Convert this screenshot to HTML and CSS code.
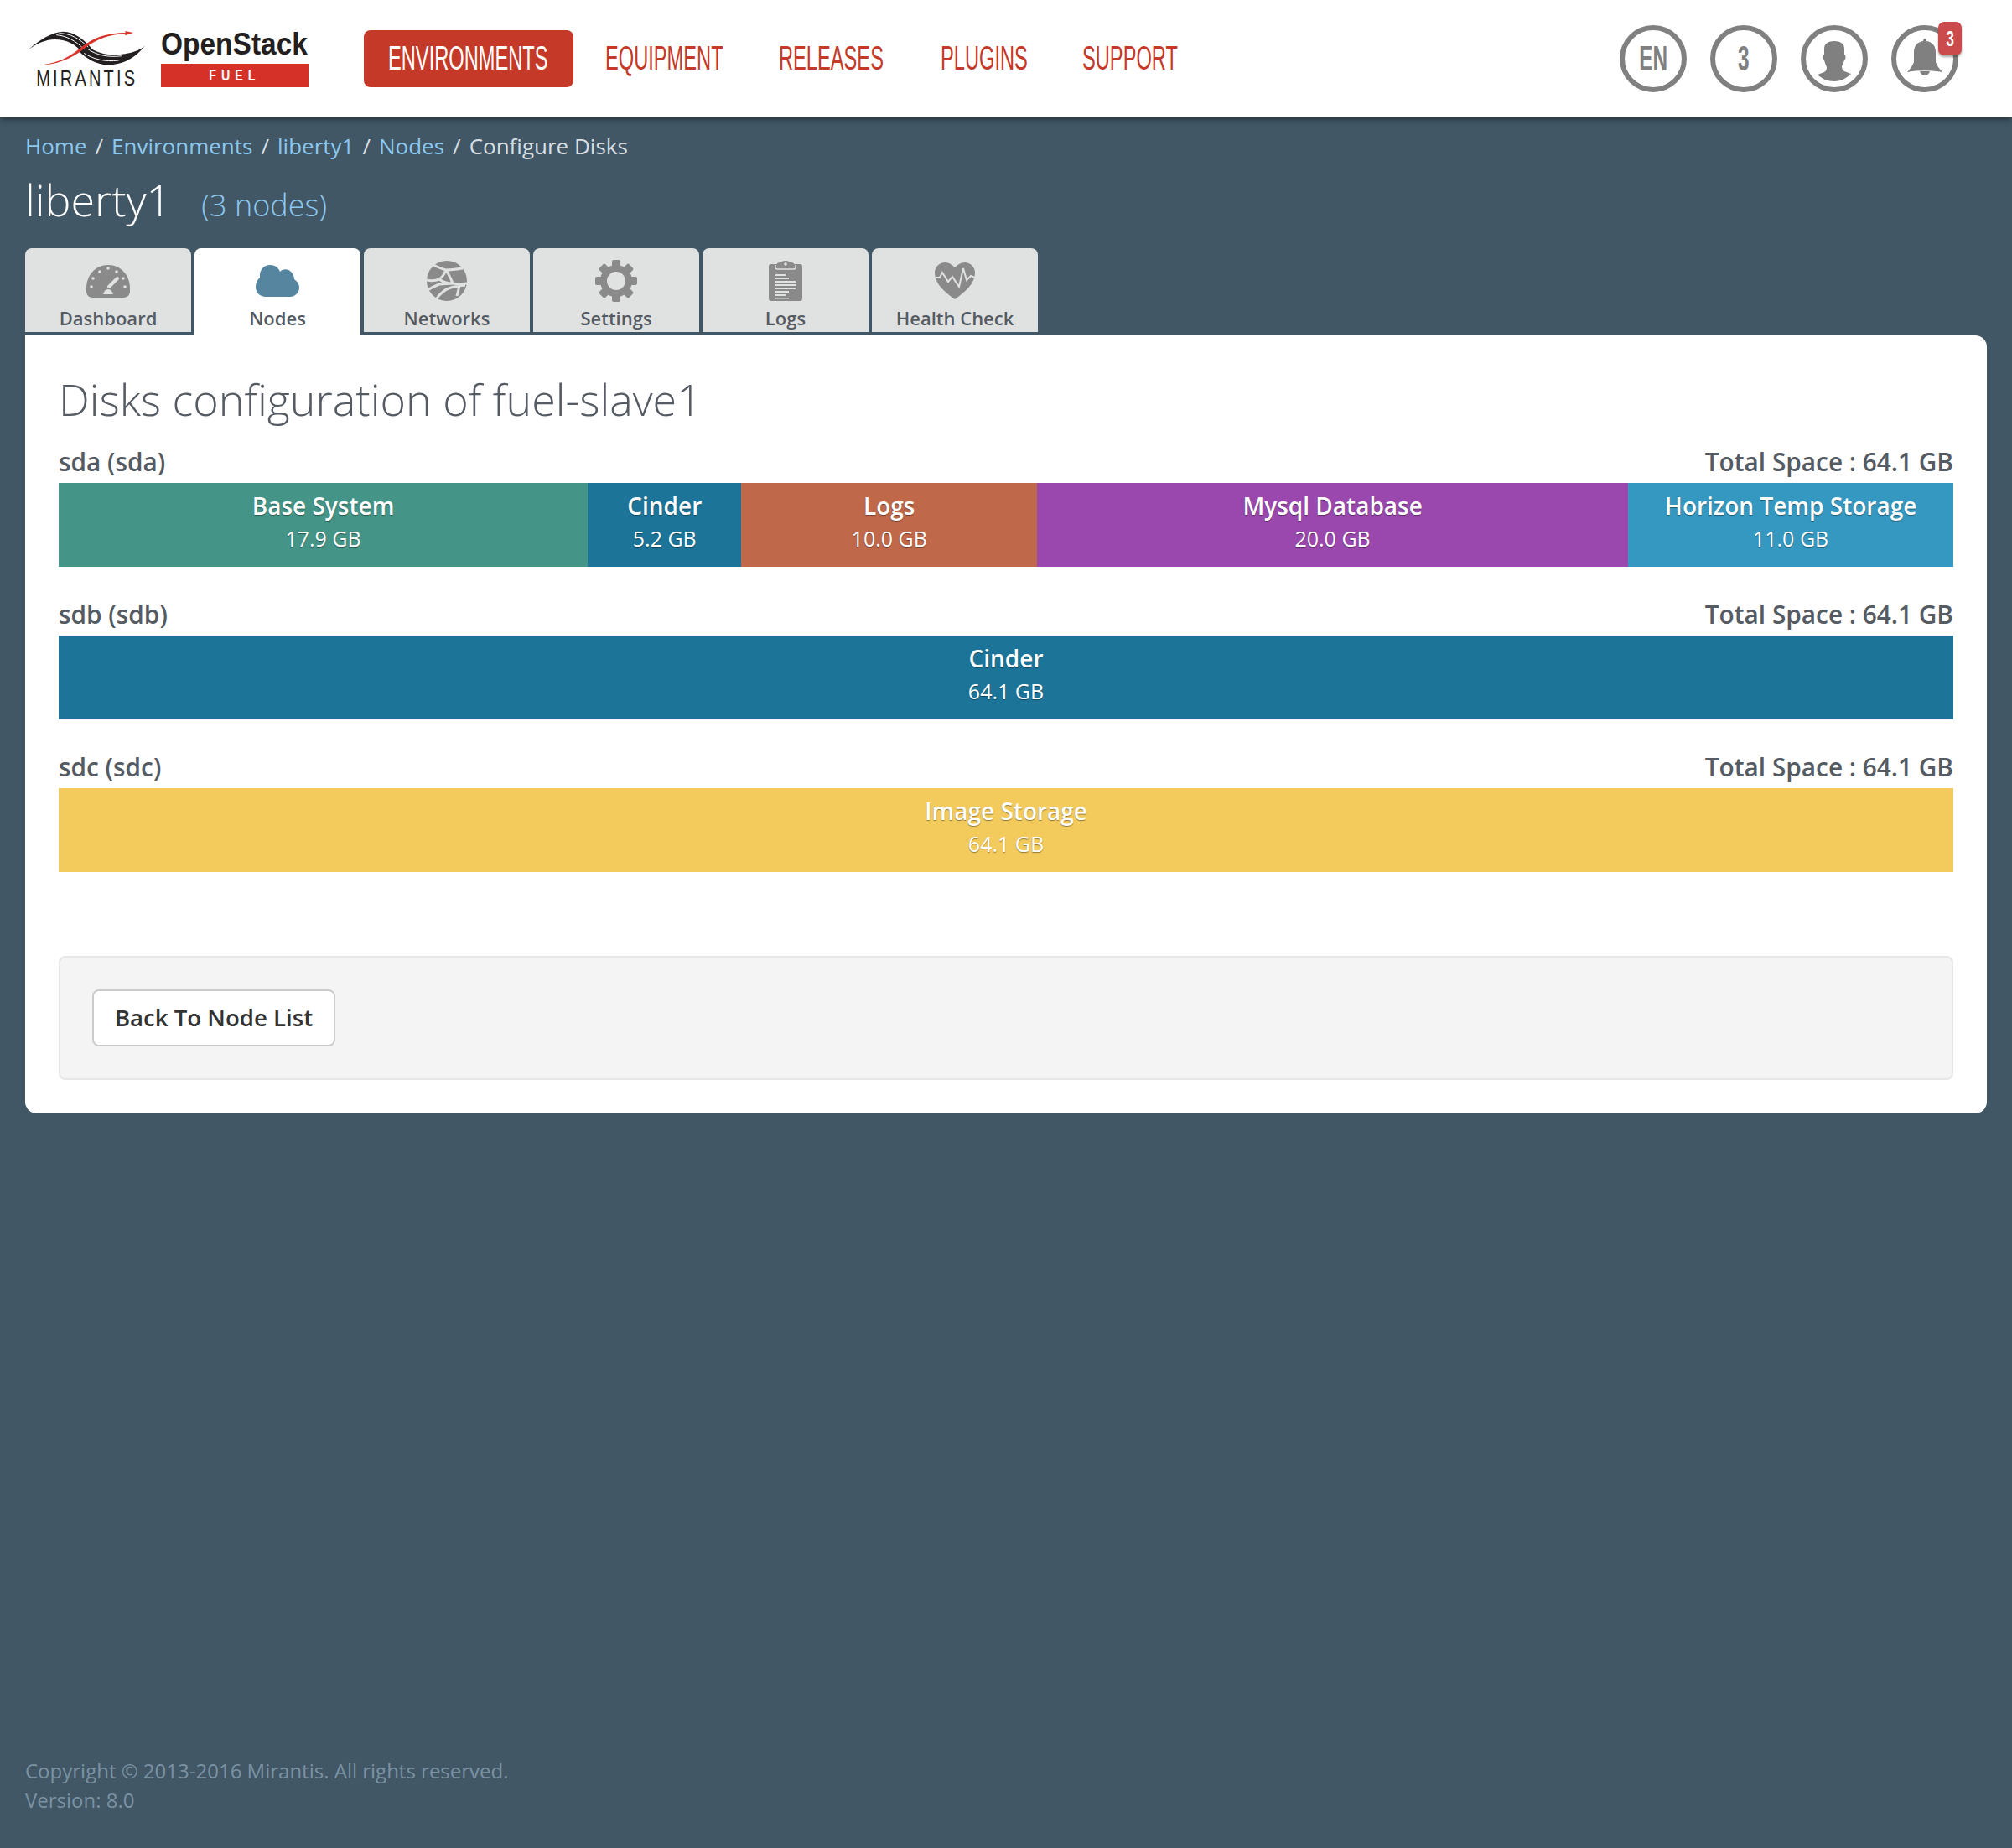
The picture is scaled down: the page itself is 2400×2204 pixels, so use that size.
FILE: index.html
```html
<!DOCTYPE html>
<html lang="en">
<head>
    <meta charset="UTF-8">
    <title>Configure Disks</title>
    <link rel="stylesheet" href="styles.css">
</head>
<body>
    <header class="navbar">
        <div class="logo">
            <div class="logo-mirantis">
                <svg class="logo-mark" viewBox="38 32 424 124" width="141" height="41">
                    <path fill="#231f20" d="M38 100C80 65 120 36 165 34c38 0 74 26 107 66l-30 20c-30-43-68-58-108-58-30 0-64 14-96 38z"/>
                    <path fill="#231f20" d="M460 85c-40 52-90 70-135 69-42-2-78-24-103-49l26-22c40 33 88 39 128 33 30-4 64-11 84-31z"/>
                    <path fill="none" stroke="#fff" stroke-width="3" d="M140 46c35 3 70 20 100 52M150 40c40 0 75 20 105 50M255 98c30 20 70 30 120 24M240 112c35 22 75 32 125 26"/>
                    <path fill="#d9342b" d="M80 155c55-4 100-24 145-60 50-42 100-56 165-57l-2-6 30 6-30 10 1-6c-60 3-105 19-150 55-50 38-100 56-159 58z"/>
                </svg>
                <span class="logo-name">MIRANTIS</span>
            </div>
            <div class="logo-product">
                <span class="logo-openstack">OpenStack</span>
                <span class="logo-fuel"><span>FUEL</span></span>
            </div>
        </div>
        <nav class="main-nav">
            <a class="nav-item nav-env active"><span>ENVIRONMENTS</span></a>
            <a class="nav-item nav-equip"><span>EQUIPMENT</span></a>
            <a class="nav-item nav-rel"><span>RELEASES</span></a>
            <a class="nav-item nav-plug"><span>PLUGINS</span></a>
            <a class="nav-item nav-sup"><span>SUPPORT</span></a>
        </nav>
        <div class="nav-icons">
            <div class="round-icon"><span class="round-text">EN</span></div>
            <div class="round-icon"><span class="round-text">3</span></div>
            <div class="round-icon">
                <svg class="icon-user" viewBox="0 0 40 48" width="40" height="48">
                    <path fill="#808080" d="M8 9c0-6 5-9 12-9s12 3 12 9v7c2 1 2 5 0 7-1 3-2 5-3 7 0 3 1 5 3 6 3 1 5 2 8 3-5 5-12 9-20 9S5 45 0 40c3-1 5-2 8-3 2-1 3-3 3-6-1-2-2-5-3-8-2-2-2-6 0-7V9z"/>
                </svg>
            </div>
            <div class="round-icon">
                <svg class="icon-bell" viewBox="0 0 42 44" width="42" height="44">
                    <path fill="#808080" d="M19 3c0-4 4-4 4 0 7 1 11 6 11 13v12c1 3 4 8 8 12-6-1-14-2-21-2S6 39 0 40c4-4 7-9 8-12V16C8 9 12 4 19 3z"/>
                    <path fill="#808080" d="M15 39c4-.5 8-.5 12 0-1 3-3 5-6 5s-5-2-6-5z"/>
                </svg>
                <span class="badge"><span>3</span></span>
            </div>
        </div>
    </header>

    <main class="content">
        <div class="breadcrumbs">
            <a>Home</a><i>/</i><a>Environments</a><i>/</i><a>liberty1</a><i>/</i><a>Nodes</a><i>/</i><span>Configure Disks</span>
        </div>
        <div class="cluster-title">
            <h1>liberty1</h1>
            <span class="node-count">(3 nodes)</span>
        </div>

        <div class="tabs">
            <div class="tab">
                <div class="tab-icon">
                    <svg viewBox="0 0 52 39" width="52" height="39">
                        <path fill="#8a8a8a" d="M26 0C10 0 0 13 0 28v3c0 5 3 8 8 8h36c5 0 8-3 8-8v-3C52 13 42 0 26 0z"/>
                        <g fill="#e0e2e2"><circle cx="26" cy="4" r="1.8"/><circle cx="16" cy="8" r="1.8"/><circle cx="36" cy="8" r="1.8"/><circle cx="8" cy="16" r="1.8"/><circle cx="44" cy="16" r="1.8"/><circle cx="6" cy="26" r="1.8"/><circle cx="46" cy="26" r="1.8"/></g>
                        <path fill="none" stroke="#e0e2e2" stroke-width="4" stroke-linecap="round" d="M27 26l10-10"/>
                        <path fill="#e0e2e2" d="M20 35c1-4 3-6 6-6s5 2 6 6z"/>
                    </svg>
                </div>
                <span>Dashboard</span>
            </div>
            <div class="tab active">
                <div class="tab-icon">
                    <svg viewBox="0 0 52 38" width="52" height="38">
                        <path fill="#55859f" d="M12 38C5 38 0 33 0 26c0-5 2-8 5-11C4 6 10 0 17 0c6 0 10 3 12 8 3-3 9-4 13 0 3 3 4 6 4 9 4 3 6 6 6 10 0 6-5 11-11 11z"/>
                    </svg>
                </div>
                <span>Nodes</span>
            </div>
            <div class="tab">
                <div class="tab-icon">
                    <svg viewBox="0 0 48 48" width="48" height="48">
                        <circle cx="24" cy="24" r="24" fill="#8a8a8a"/>
                        <path fill="none" stroke="#e0e2e2" stroke-width="3" d="M6 4c6 3 12 6 17 7 6 0 13-1 20-2M23 11c-2 5-5 9-8 11-5 2-10 2-15 1M15 22c5 4 11 5 16 5M23 11c3 5 6 10 8 16M31 27c6 1 11 1 17 0M1 35c5-3 9-5 14-7l16-1M11 46c5-7 11-12 18-14 5-1 12-3 17-3M39 30l-3 12"/>
                    </svg>
                </div>
                <span>Networks</span>
            </div>
            <div class="tab">
                <div class="tab-icon">
                    <svg viewBox="0 0 50 50" width="50" height="50">
                        <circle cx="25" cy="25" r="15" fill="none" stroke="#8a8a8a" stroke-width="8"/>
                        <g fill="#8a8a8a">
                            <rect x="20" y="0" width="10" height="10" rx="2"/>
                            <rect x="20" y="0" width="10" height="10" rx="2" transform="rotate(45 25 25)"/>
                            <rect x="20" y="0" width="10" height="10" rx="2" transform="rotate(90 25 25)"/>
                            <rect x="20" y="0" width="10" height="10" rx="2" transform="rotate(135 25 25)"/>
                            <rect x="20" y="0" width="10" height="10" rx="2" transform="rotate(180 25 25)"/>
                            <rect x="20" y="0" width="10" height="10" rx="2" transform="rotate(225 25 25)"/>
                            <rect x="20" y="0" width="10" height="10" rx="2" transform="rotate(270 25 25)"/>
                            <rect x="20" y="0" width="10" height="10" rx="2" transform="rotate(315 25 25)"/>
                        </g>
                    </svg>
                </div>
                <span>Settings</span>
            </div>
            <div class="tab">
                <div class="tab-icon">
                    <svg viewBox="0 0 40 48" width="40" height="48">
                        <path fill="#8a8a8a" d="M3 4h7V3c4-1 6-3 10-3s6 2 10 3v1h7c2 0 3 1 3 3v38c0 2-1 3-3 3H3c-2 0-3-1-3-3V7c0-2 1-3 3-3z"/>
                        <path fill="none" stroke="#e0e2e2" stroke-width="1.4" d="M8 5v3c0 1 1 2 2 2h20c1 0 2-1 2-2V5"/>
                        <circle cx="20" cy="4" r="1.8" fill="#e0e2e2"/>
                        <g fill="#e0e2e2"><rect x="8" y="16" width="12" height="2"/><rect x="8" y="20" width="16" height="2"/><rect x="8" y="24" width="24" height="2"/><rect x="8" y="28" width="24" height="2"/><rect x="8" y="32" width="24" height="2"/><rect x="8" y="36" width="16" height="2"/><rect x="8" y="40" width="12" height="2"/><rect x="8" y="44" width="16" height="1.5"/></g>
                    </svg>
                </div>
                <span>Logs</span>
            </div>
            <div class="tab">
                <div class="tab-icon">
                    <svg viewBox="0 0 48 44" width="48" height="44">
                        <path fill="#8a8a8a" d="M24 44C13 36 0 26 0 12 0 5 6 0 12 0c5 0 9 3 12 6 3-3 7-6 12-6 6 0 12 5 12 12 0 14-13 24-24 32z"/>
                        <path fill="none" stroke="#e0e2e2" stroke-width="2" d="M1 18h5l3-6 7 11 5-6 8 12 5-22 4 14 5-5 5 2"/>
                    </svg>
                </div>
                <span>Health Check</span>
            </div>
        </div>

        <section class="panel">
            <h2 class="panel-title">Disks configuration of fuel-slave1</h2>

            <div class="disk">
                <div class="disk-head"><span>sda (sda)</span><span>Total Space : 64.1 GB</span></div>
                <div class="disk-bar">
                    <div class="volume base" style="flex-grow: 17.9"><b>Base System</b><span>17.9 GB</span></div>
                    <div class="volume cinder" style="flex-grow: 5.2"><b>Cinder</b><span>5.2 GB</span></div>
                    <div class="volume logs" style="flex-grow: 10"><b>Logs</b><span>10.0 GB</span></div>
                    <div class="volume mysql" style="flex-grow: 20"><b>Mysql Database</b><span>20.0 GB</span></div>
                    <div class="volume horizon" style="flex-grow: 11"><b>Horizon Temp Storage</b><span>11.0 GB</span></div>
                </div>
            </div>
            <div class="disk">
                <div class="disk-head"><span>sdb (sdb)</span><span>Total Space : 64.1 GB</span></div>
                <div class="disk-bar">
                    <div class="volume cinder" style="flex-grow: 64.1"><b>Cinder</b><span>64.1 GB</span></div>
                </div>
            </div>
            <div class="disk">
                <div class="disk-head"><span>sdc (sdc)</span><span>Total Space : 64.1 GB</span></div>
                <div class="disk-bar">
                    <div class="volume image" style="flex-grow: 64.1"><b>Image Storage</b><span>64.1 GB</span></div>
                </div>
            </div>

            <div class="well">
                <button class="btn">Back To Node List</button>
            </div>
        </section>
    </main>

    <footer class="footer">
        <div>Copyright © 2013-2016 Mirantis. All rights reserved.</div>
        <div>Version: 8.0</div>
    </footer>
</body>
</html>
```

FILE: styles.css
```css
html, body {
    height: 100%;
}
body {
    margin: 0;
    background: #415766;
    font-family: "Open Sans", sans-serif;
    color: #555b63;
    display: flex;
    flex-direction: column;
    min-height: 2204px;
    box-sizing: border-box;
}
.navbar {
    height: 140px;
    flex: none;
    background: #fff;
    box-shadow: 0 2px 8px rgba(0, 0, 0, 0.45);
    display: flex;
    align-items: center;
    padding: 0 64px 0 30px;
    position: relative;
}
.logo {
    display: flex;
    width: 404px;
    height: 68px;
    flex: none;
    gap: 18px;
    padding-left: 3px;
    box-sizing: border-box;
    align-items: flex-start;
}
.logo-mirantis {
    display: flex;
    flex-direction: column;
    align-items: center;
    width: 141px;
}
.logo-mark {
    display: block;
    margin-top: 1px;
}
.logo-name {
    font-family: "Liberation Sans", sans-serif;
    font-size: 25px;
    letter-spacing: 4px;
    line-height: 28px;
    margin-top: 1px;
    color: #231f20;
    white-space: nowrap;
    transform: scaleX(0.8);
}
.logo-product {
    display: flex;
    flex-direction: column;
    width: 176px;
}
.logo-openstack {
    font-family: "Liberation Sans", sans-serif;
    font-size: 36px;
    line-height: 36px;
    font-weight: bold;
    margin-top: -1px;
    color: #231f20;
    white-space: nowrap;
    transform: scaleX(0.93);
    transform-origin: left center;
}
.logo-fuel {
    background: #d63128;
    color: #fff;
    text-align: center;
    font-family: "Liberation Sans", sans-serif;
    font-size: 19px;
    font-weight: bold;
    line-height: 28px;
    margin-top: 5px;
}
.logo-fuel span {
    display: inline-block;
    letter-spacing: 8px;
    transform: scaleX(0.75);
}
.main-nav {
    display: flex;
    align-items: center;
    gap: 9px;
}
.nav-item {
    height: 68px;
    padding-left: 29px;
    padding-bottom: 2px;
    box-sizing: border-box;
    display: flex;
    align-items: center;
    border-radius: 8px;
    color: #c43927;
    font-family: "Liberation Sans", sans-serif;
    font-size: 41px;
    white-space: nowrap;
}
/* no condensed font here, so the text is squeezed and the widths are set by hand */
.nav-item span {
    display: inline-block;
    transform: scaleX(0.577);
    transform-origin: left center;
}
.nav-env { width: 250px; }
.nav-equip { width: 198px; }
.nav-rel { width: 184px; }
.nav-plug { width: 160px; }
.nav-sup { width: 169px; }
.nav-item.active {
    background: #c43927;
    color: #fff;
}
.nav-icons {
    margin-left: auto;
    display: flex;
    gap: 28px;
}
.round-icon {
    width: 80px;
    height: 80px;
    box-sizing: border-box;
    border: 6px solid #808080;
    border-radius: 50%;
    display: flex;
    align-items: center;
    justify-content: center;
    color: #808080;
    font-family: "Liberation Sans", sans-serif;
    font-weight: bold;
    position: relative;
}
.round-text {
    font-size: 42px;
    transform: scaleX(0.58);
}
.icon-user {
    margin-top: 6px;
}
.icon-bell {
    margin-top: -4px;
}
.badge {
    position: absolute;
    top: -10px;
    right: -10px;
    width: 28px;
    height: 40px;
    border-radius: 7px;
    background: #cb4a4c;
    color: #fff;
    font-size: 26px;
    display: flex;
    align-items: center;
    justify-content: center;
    box-shadow: 0 2px 3px rgba(0, 0, 0, 0.35);
}
.badge span {
    transform: scaleX(0.65);
}
.content {
    padding: 0 30px;
    flex: 1;
}
.breadcrumbs {
    margin-top: 15px;
    font-size: 26px;
    line-height: 38px;
    color: #d8dfe3;
}
.breadcrumbs a {
    color: #8cc8ee;
}
.breadcrumbs i {
    font-style: normal;
    margin: 0 10px;
}
.cluster-title {
    display: flex;
    align-items: baseline;
    margin-top: 9px;
    height: 71px;
}
.cluster-title h1 {
    margin: 0;
    font-size: 52px;
    font-weight: 300;
    color: #fff;
    line-height: 71px;
}
.node-count {
    margin-left: 36px;
    font-size: 36px;
    font-weight: 300;
    color: #8cc8ee;
}
.tabs {
    display: flex;
    gap: 4px;
    margin-top: 23px;
    height: 104px;
}
.tab {
    width: 198px;
    height: 100px;
    background: #e0e2e2;
    border-radius: 8px 8px 0 0;
    display: flex;
    flex-direction: column;
    align-items: center;
    font-size: 22px;
    font-weight: 600;
    line-height: 30px;
    padding-top: 14px;
    box-sizing: border-box;
}
.tab-icon {
    height: 50px;
    margin-bottom: 4px;
    display: flex;
    align-items: center;
}
.tab.active {
    background: #fff;
    height: 104px;
}
.panel {
    background: #fff;
    border-radius: 0 14px 14px 14px;
    height: 928px;
    padding: 38px 40px 40px;
    box-sizing: border-box;
}
.panel-title {
    margin: 0 0 19px;
    font-size: 52px;
    font-weight: 300;
    line-height: 76px;
    color: #555b63;
}
.disk {
    height: 182px;
}
.disk-head {
    display: flex;
    justify-content: space-between;
    font-size: 29.8px;
    font-weight: 600;
    line-height: 36px;
    height: 43px;
}
.disk-bar {
    display: flex;
    height: 100px;
}
.volume {
    flex-basis: 0;
    min-width: 0;
    display: flex;
    flex-direction: column;
    align-items: center;
    justify-content: center;
    padding-bottom: 9px;
    box-sizing: border-box;
    color: #fff;
    text-shadow: 0 1px 1px rgba(0, 0, 0, 0.4);
    white-space: nowrap;
}
.volume b {
    font-size: 28px;
    font-weight: 600;
    line-height: 40px;
}
.volume span {
    font-size: 25px;
    line-height: 38px;
}
.base { background: #449587; }
.cinder { background: #1c7599; }
.logs { background: #c0684a; }
.mysql { background: #9a48ad; }
.horizon { background: #3598c1; }
.image { background: #f3ca5c; }
.well {
    margin-top: 61px;
    height: 148px;
    box-sizing: border-box;
    background: #f4f4f4;
    border: 2px solid #e6e6e6;
    border-radius: 8px;
    padding: 38px;
}
.btn {
    width: 290px;
    height: 68px;
    background: #fff;
    border: 2px solid #ccc;
    border-radius: 8px;
    font-family: inherit;
    font-size: 27.6px;
    font-weight: 600;
    color: #333;
    padding: 0 0 2px;
}
.footer {
    padding: 0 30px 40px;
    font-size: 24px;
    line-height: 35px;
    color: #7b92a2;
}
```
